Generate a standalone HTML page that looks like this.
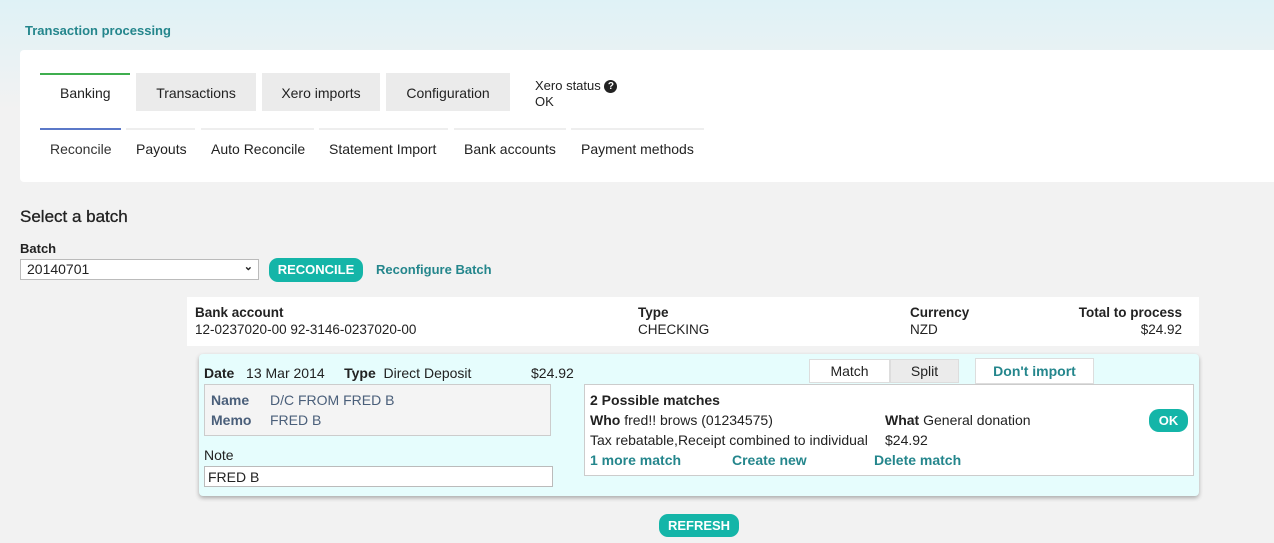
<!DOCTYPE html>
<html><head><style>
*{box-sizing:border-box;margin:0;padding:0}
body{width:1274px;height:543px;overflow:hidden;background:#f2f2f2;font-family:"Liberation Sans",sans-serif;font-size:14px;color:#222;position:relative}
.a{position:absolute;white-space:nowrap}
.b{font-weight:bold}
.teal{color:#24868c;font-weight:bold}
.btn{position:absolute;background:#14b5a8;color:#fff;font-weight:bold;border-radius:9px;text-align:center;font-size:13px}
</style></head><body>
<div class="a" style="left:0;top:0;width:1274px;height:110px;background:linear-gradient(180deg,#dff2f6,#f2f2f2)"></div>
<div class="a teal" style="left:25px;top:23px;font-size:13px">Transaction processing</div>
<div class="a" style="left:20px;top:50px;width:1254px;height:132px;background:#fff;border-radius:4px 0 0 4px"></div>
<div class="a" style="left:40px;top:73px;width:90px;height:2px;background:#3fae4f"></div>
<div class="a" style="left:60px;top:85px">Banking</div>
<div class="a" style="left:136px;top:73px;width:120px;height:38px;background:#ebebeb;text-align:center;line-height:40px">Transactions</div>
<div class="a" style="left:262px;top:73px;width:118px;height:38px;background:#ebebeb;text-align:center;line-height:40px">Xero imports</div>
<div class="a" style="left:386px;top:73px;width:124px;height:38px;background:#ebebeb;text-align:center;line-height:40px">Configuration</div>
<div class="a" style="left:535px;top:78px;font-size:13px">Xero status <span style="display:inline-block;width:13px;height:13px;border-radius:50%;background:#222;color:#fff;font-size:10px;text-align:center;line-height:13px;font-weight:bold;vertical-align:1px">?</span></div>
<div class="a" style="left:535px;top:94px;font-size:13px">OK</div>
<div class="a" style="left:40px;top:128px;width:81px;height:2px;background:#5b78c8"></div>
<div class="a" style="left:126px;top:128px;width:69px;height:2px;background:#eee"></div>
<div class="a" style="left:201px;top:128px;width:113px;height:2px;background:#eee"></div>
<div class="a" style="left:319px;top:128px;width:129px;height:2px;background:#eee"></div>
<div class="a" style="left:454px;top:128px;width:112px;height:2px;background:#eee"></div>
<div class="a" style="left:571px;top:128px;width:133px;height:2px;background:#eee"></div>
<div class="a" style="left:50px;top:141px;color:#333">Reconcile</div>
<div class="a" style="left:136px;top:141px">Payouts</div>
<div class="a" style="left:211px;top:141px">Auto Reconcile</div>
<div class="a" style="left:329px;top:141px">Statement Import</div>
<div class="a" style="left:464px;top:141px">Bank accounts</div>
<div class="a" style="left:581px;top:141px">Payment methods</div>
<div class="a" style="left:20px;top:207px;font-size:17px;color:#222;-webkit-text-stroke:0.3px #222">Select a batch</div>
<div class="a b" style="left:20px;top:241px;font-size:13px">Batch</div>
<div class="a" style="left:20px;top:259px;width:239px;height:21px;background:#fff;border:1px solid #bbb;font-size:14px;padding:1px 6px">20140701<span style="position:absolute;right:5px;top:0px;font-size:11px;font-weight:bold">&#8964;</span></div>
<div class="btn" style="left:269px;top:258px;width:94px;height:24px;line-height:24px">RECONCILE</div>
<div class="a teal" style="left:376px;top:262px;font-size:13px">Reconfigure Batch</div>
<div class="a" style="left:187px;top:297px;width:1012px;height:49px;background:#fff;font-size:13.5px">
<div class="a b" style="left:8px;top:8px">Bank account</div><div class="a" style="left:8px;top:25px">12-0237020-00 92-3146-0237020-00</div>
<div class="a b" style="left:451px;top:8px">Type</div><div class="a" style="left:451px;top:25px">CHECKING</div>
<div class="a b" style="left:723px;top:8px">Currency</div><div class="a" style="left:723px;top:25px">NZD</div>
<div class="a b" style="right:17px;top:8px">Total to process</div><div class="a" style="right:17px;top:25px">$24.92</div>
</div>
<div class="a" style="left:199px;top:354px;width:1000px;height:142px;background:#e6fdfd;border-radius:4px;box-shadow:0 2px 4px rgba(0,0,0,.3);font-size:14px">
<div class="a" style="left:5px;top:11px"><b>Date</b>&nbsp;&nbsp; 13 Mar 2014 &nbsp;&nbsp;&nbsp; <b>Type</b>&nbsp;&nbsp;Direct Deposit</div>
<div class="a" style="left:332px;top:11px">$24.92</div>
<div class="a" style="left:5px;top:30px;width:347px;height:52px;background:#f4f4f4;border:1px solid #ccc;color:#4a5f7a">
<div class="a b" style="left:6px;top:7px">Name</div><div class="a" style="left:65px;top:7px">D/C FROM FRED B</div>
<div class="a b" style="left:6px;top:27px">Memo</div><div class="a" style="left:65px;top:27px">FRED B</div></div>
<div class="a" style="left:5px;top:93px">Note</div>
<div class="a" style="left:5px;top:112px;width:349px;height:21px;background:#fff;border:1px solid #bbb;padding:2px 3px">FRED B</div>
<div class="a" style="left:610px;top:5px;width:81px;height:24px;background:#fff;border:1px solid #ddd;text-align:center;line-height:23px">Match</div>
<div class="a" style="left:691px;top:5px;width:69px;height:24px;background:#ebebeb;border:1px solid #ddd;text-align:center;line-height:23px">Split</div>
<div class="a teal" style="left:776px;top:4px;width:119px;height:26px;background:#fff;border:1px solid #ddd;text-align:center;line-height:25px">Don't import</div>
<div class="a" style="left:385px;top:30px;width:610px;height:92px;background:#fff;border:1px solid #ccc">
<div class="a b" style="left:5px;top:7px">2 Possible matches</div>
<div class="a" style="left:5px;top:27px"><b>Who</b> fred!! brows (01234575)</div>
<div class="a" style="left:300px;top:27px"><b>What</b> General donation</div>
<div class="a" style="left:5px;top:47px">Tax rebatable,Receipt combined to individual</div>
<div class="a" style="left:300px;top:47px">$24.92</div>
<div class="a teal" style="left:5px;top:67px">1 more match</div>
<div class="a teal" style="left:147px;top:67px">Create new</div>
<div class="a teal" style="left:289px;top:67px">Delete match</div>
<div class="btn" style="left:564px;top:24px;width:39px;height:23px;line-height:23px;border-radius:10px">OK</div>
</div></div>
<div class="btn" style="left:659px;top:514px;width:80px;height:23px;line-height:23px">REFRESH</div>
</body></html>
